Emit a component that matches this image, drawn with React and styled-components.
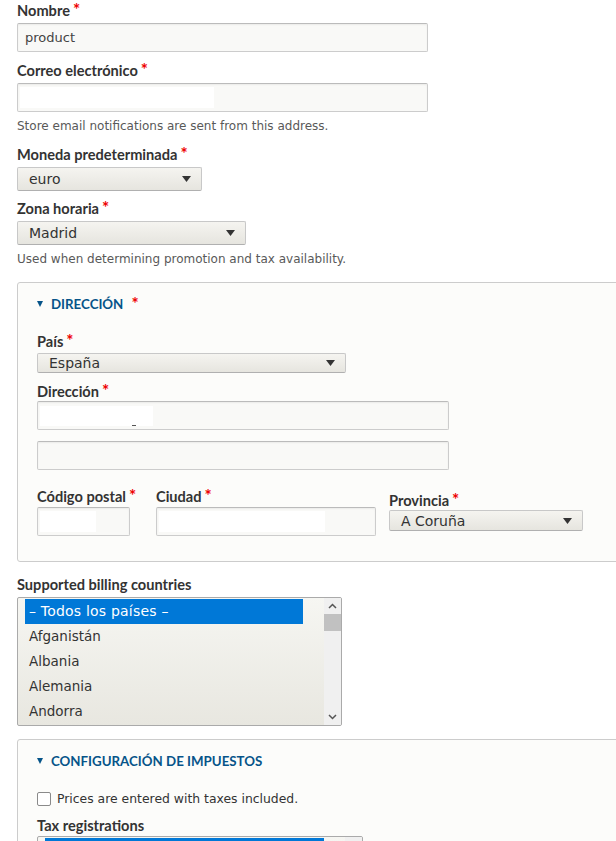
import React from "react";
import styled, { createGlobalStyle } from "styled-components";

const Global = createGlobalStyle`
  html, body { margin: 0; padding: 0; background: #fff; overflow: hidden; }
  body { font-family: "DejaVu Sans", Verdana, sans-serif; color: #333; }
  * { box-sizing: border-box; }
`;

const Page = styled.div`
  padding: 2px 0 0 17px;
  width: 640px;
`;

const Item = styled.div`
  margin-bottom: ${(p) => p.$mb ?? 10}px;
`;

const Label = styled.label`
  display: block;
  font-family: Lato, "Liberation Sans", sans-serif;
  font-weight: 700;
  font-size: 14.6px;
  line-height: 18px;
  height: 18px;
  color: #333;
  margin-bottom: ${(p) => p.$mb ?? 3}px;
  white-space: nowrap;
`;

const Req = styled.span`
  color: #e00;
  font-size: 17px;
  line-height: 0;
  margin-left: ${(p) => p.$ml ?? 3}px;
`;

const Input = styled.div`
  width: ${(p) => p.$w}px;
  height: 29px;
  border: 1px solid #ccc;
  border-top-color: #bbb;
  border-radius: 2px;
  background: #f9f9f7;
  box-shadow: inset 0 1px 2px rgba(0, 0, 0, 0.06);
  font-size: 13px;
  color: #444;
  padding: 3px 2px;
  display: flex;
  align-items: center;
`;

const InputText = styled.span`
  padding-left: 5px;
`;

const Redact = styled.span`
  display: block;
  width: ${(p) => p.$w}px;
  height: ${(p) => p.$h ?? 21}px;
  background: #fff;
  position: relative;
`;

const Dash = styled.span`
  position: absolute;
  left: 92px;
  bottom: 0;
  width: 4px;
  height: 1px;
  background: #555;
`;

const Select = styled.div`
  width: ${(p) => p.$w}px;
  height: ${(p) => p.$h ?? 24}px;
  border: 1px solid #c8c8c8;
  border-bottom-color: #b0b0b0;
  border-radius: 2px;
  background: linear-gradient(#f5f4f0, #e6e5df);
  display: flex;
  align-items: center;
  justify-content: space-between;
  padding: 0 10px 0 11px;
  font-size: 14px;
  color: #333;
`;

const Arrow = () => (
  <svg width="9" height="6" viewBox="0 0 9 6">
    <path d="M0 0 H9 L4.5 6 Z" fill="#333" />
  </svg>
);

const Desc = styled.div`
  font-size: 12px;
  color: #595959;
  margin-top: 6px;
  line-height: 16px;
`;

const Fieldset = styled.div`
  width: 620px;
  border: 1px solid #ccc;
  border-radius: 3px;
  background: #fcfcfa;
  padding: 11px 0 25px 19px;
  margin-bottom: ${(p) => p.$mb ?? 0}px;
`;

const Summary = styled.div`
  display: flex;
  align-items: center;
  height: 20px;
  font-family: Lato, "Liberation Sans", sans-serif;
  font-weight: 700;
  font-size: 13.3px;
  color: #065489;
  text-transform: uppercase;
  margin-bottom: ${(p) => p.$mb ?? 19}px;
`;

const Tri = styled.span`
  width: 0;
  height: 0;
  border-left: 3.5px solid transparent;
  border-right: 3.5px solid transparent;
  border-top: 6px solid #065489;
  margin: 0 8px 0 0;
`;

const Row = styled.div`
  display: flex;
  align-items: flex-start;
`;

const Col = styled.div`
  width: ${(p) => p.$w}px;
  margin-top: ${(p) => p.$mt ?? 0}px;
`;

const ListBox = styled.div`
  width: ${(p) => p.$w}px;
  height: ${(p) => p.$h}px;
  border: 1px solid #aaa;
  border-radius: 2px;
  background: linear-gradient(#f6f6f2, #e8e7e0);
  display: flex;
  overflow: hidden;
`;

const Options = styled.div`
  flex: 1;
  padding: 1px 21px 0 7px;
`;

const Option = styled.div`
  height: 25px;
  line-height: 25px;
  padding-left: 4px;
  font-size: ${(p) => (p.$sel ? "14px" : "13.5px")};
  letter-spacing: ${(p) => (p.$sel ? "0.2px" : "0")};
  color: ${(p) => (p.$sel ? "#fff" : "#333")};
  background: ${(p) => (p.$sel ? "#0078d7" : "transparent")};
  white-space: nowrap;
`;

const Scroll = styled.div`
  width: 17px;
  background: #f0f0f0;
  display: flex;
  flex-direction: column;
  align-items: center;
`;

const ScrollBtn = styled.div`
  height: 16px;
  display: flex;
  align-items: center;
  justify-content: center;
`;

const Thumb = styled.div`
  width: 17px;
  height: 17px;
  background: #c1c1c1;
`;

const ScrollMid = styled.div`
  flex: 1;
  width: 100%;
`;

const Chevron = ({ up }) => (
  <svg width="9" height="6" viewBox="0 0 9 6">
    <path
      d={up ? "M1 5 L4.5 1.5 L8 5" : "M1 1 L4.5 4.5 L8 1"}
      stroke="#555"
      strokeWidth="1.5"
      fill="none"
    />
  </svg>
);

const CheckRow = styled.label`
  display: flex;
  align-items: center;
  gap: 6px;
  font-size: 12.4px;
  line-height: 16px;
  color: #333;
  margin-bottom: 10px;
`;

const Box = styled.span`
  width: 14px;
  height: 14px;
  border: 1.5px solid #8a8a8a;
  border-radius: 2px;
  background: #fff;
`;

const R = ({ ml }) => <Req $ml={ml}>*</Req>;

export default function App() {
  return (
    <>
      <Global />
      <Page>
        <Item>
          <Label>Nombre<R /></Label>
          <Input $w={411}><InputText>product</InputText></Input>
        </Item>
        <Item $mb={12}>
          <Label>Correo electrónico<R /></Label>
          <Input $w={411}><Redact $w={194} /></Input>
          <Desc>Store email notifications are sent from this address.</Desc>
        </Item>
        <Item $mb={9}>
          <Label>Moneda predeterminada<R /></Label>
          <Select $w={185}>euro<Arrow /></Select>
        </Item>
        <Item $mb={15}>
          <Label>Zona horaria<R /></Label>
          <Select $w={229}>Madrid<Arrow /></Select>
          <Desc>Used when determining promotion and tax availability.</Desc>
        </Item>
        <Fieldset $mb={14}>
          <Summary><Tri />Dirección<R ml={8} /></Summary>
          <Item $mb={10}>
            <Label $mb={2}>País<R /></Label>
            <Select $w={309} $h={20}>España<Arrow /></Select>
          </Item>
          <Item $mb={11}>
            <Label $mb={0}>Dirección<R /></Label>
            <Input $w={412}><Redact $w={113} $h={20}><Dash /></Redact></Input>
          </Item>
          <Item $mb={18}>
            <Input $w={412} />
          </Item>
          <Row>
            <Col $w={119}>
              <Label $mb={1}>Código postal<R /></Label>
              <Input $w={93}><Redact $w={56} $h={21} /></Input>
            </Col>
            <Col $w={233}>
              <Label $mb={1}>Ciudad<R /></Label>
              <Input $w={220}><Redact $w={166} $h={21} /></Input>
            </Col>
            <Col $w={200} $mt={4}>
              <Label $mb={0}>Provincia<R /></Label>
              <Select $w={194} $h={21}>A Coruña<Arrow /></Select>
            </Col>
          </Row>
        </Fieldset>
        <Item $mb={13}>
          <Label>Supported billing countries</Label>
          <ListBox $w={325} $h={129}>
            <Options>
              <Option $sel>– Todos los países –</Option>
              <Option>Afganistán</Option>
              <Option>Albania</Option>
              <Option>Alemania</Option>
              <Option>Andorra</Option>
            </Options>
            <Scroll>
              <ScrollBtn><Chevron up /></ScrollBtn>
              <Thumb />
              <ScrollMid />
              <ScrollBtn><Chevron /></ScrollBtn>
            </Scroll>
          </ListBox>
        </Item>
        <Fieldset>
          <Summary $mb={20}><Tri />Configuración de impuestos</Summary>
          <CheckRow><Box />Prices are entered with taxes included.</CheckRow>
          <Label $mb={1}>Tax registrations</Label>
          <ListBox $w={326} $h={100}>
            <Options>
              <Option $sel>&nbsp;</Option>
            </Options>
            <Scroll />
          </ListBox>
        </Fieldset>
      </Page>
    </>
  );
}
